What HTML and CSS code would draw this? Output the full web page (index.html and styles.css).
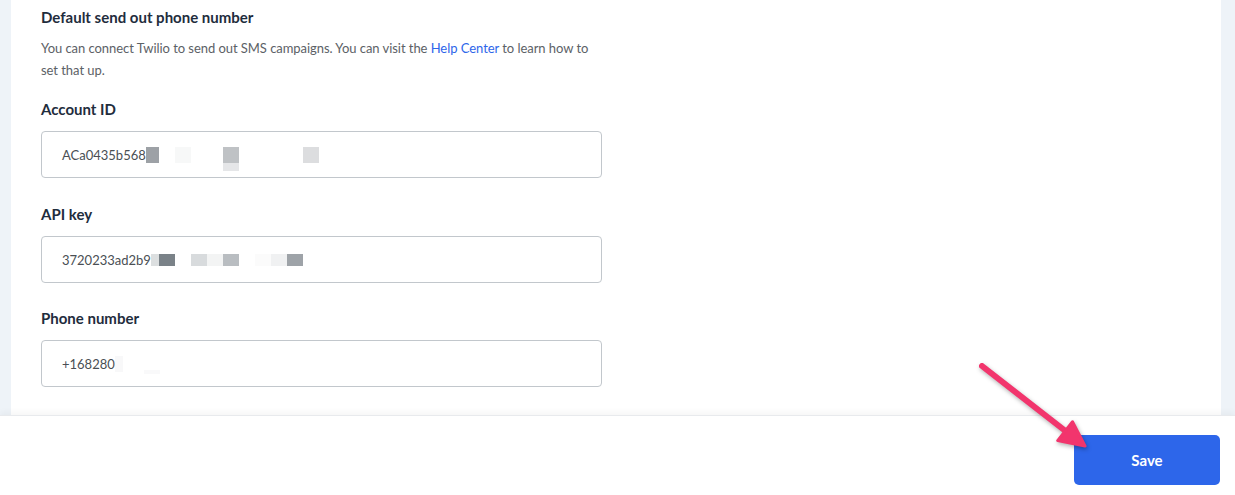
FILE: index.html
```html
<!DOCTYPE html>
<html lang="en">

<head>
    <meta charset="UTF-8" />
    <meta name="viewport" content="width=device-width, initial-scale=1" />
    <title>SMS settings</title>
    <link rel="stylesheet" href="styles.css">
</head>

<body>
    <div class="page">
        <div class="card">
            <h3 class="section-title">Default send out phone number</h3>
            <p class="section-text">
                You can connect Twilio to send out SMS campaigns. You can visit the
                <a href="#" class="link">Help Center</a> to learn how to<br>set that up.
            </p>

            <label class="field-label">Account ID</label>
            <div class="field">
                <span class="value">ACa0435b568</span>
                <span class="blur">
                    <i class="px" style="left:0;width:13px;background:#9da1a6"></i>
                    <i class="px" style="left:29px;background:#f7f8f8"></i>
                    <i class="px tall" style="left:77px;background:#bfc2c5"></i>
                    <i class="px" style="left:157px;background:#dcdddf"></i>
                </span>
            </div>

            <label class="field-label">API key</label>
            <div class="field">
                <span class="value">3720233ad2b9</span>
                <span class="blur small">
                    <i class="px" style="left:0;width:8px;background:#dcdfe0"></i>
                    <i class="px" style="left:8px;background:#7a8288"></i>
                    <i class="px" style="left:40px;background:#d8dbdd"></i>
                    <i class="px" style="left:56px;background:#f3f4f4"></i>
                    <i class="px" style="left:72px;background:#b9bdc1"></i>
                    <i class="px" style="left:104px;background:#fbfbfb"></i>
                    <i class="px" style="left:120px;background:#f0f1f2"></i>
                    <i class="px" style="left:136px;background:#9ea3a8"></i>
                </span>
            </div>

            <label class="field-label last">Phone number</label>
            <div class="field">
                <span class="value">+168280</span>
                <span class="blur">
                    <i class="px" style="left:0;width:8px;background:#f8f8f9"></i>
                    <i class="px low" style="left:29px;background:#f9f9fa"></i>
                </span>
            </div>
        </div>
    </div>

    <div class="footer">
        <button class="save-btn">Save</button>
    </div>

    <!-- flecha de la captura, va encima de todo -->
    <svg class="arrow" width="1235" height="495" viewBox="0 0 1235 495">
        <line x1="982" y1="366" x2="1068" y2="433" stroke="#f2356d" stroke-width="6" stroke-linecap="round" />
        <polygon points="1085,446 1057.7,440.6 1072.5,421.8" fill="#f2356d" stroke="#f2356d" stroke-width="3" stroke-linejoin="round" />
    </svg>
</body>

</html>
```

FILE: styles.css
```css
body {
    margin: 0;
    font-family: Lato, "Noto Sans", sans-serif;
    background: #eef3f8;
    color: #1f2d3d;
    position: relative;
    height: 495px;
    overflow: hidden;
}

.page {
    height: 415px;
    padding: 0 14px 0 11px;
    overflow: hidden;
}

.card {
    background: #fff;
    height: 100%;
    box-sizing: border-box;
    padding: 7px 0 0 30px;
}

.section-title {
    margin: 0;
    font-size: 15px;
    line-height: 20px;
    font-weight: 700;
    color: #1f2d3d;
}

.section-text {
    margin: 10px 0 0;
    font-size: 13px;
    line-height: 22px;
    letter-spacing: -0.05px;
    color: #5c6166;
}

.link {
    color: #2d66ea;
    text-decoration: none;
}

.field-label {
    display: block;
    margin-top: 18px;
    font-size: 15px;
    line-height: 20px;
    font-weight: 700;
    color: #1f2d3d;
}

.field + .field-label {
    margin-top: 26px;
}

.field + .field-label.last {
    margin-top: 25px;
}

.field {
    margin-top: 12px;
    width: 561px;
    height: 47px;
    box-sizing: border-box;
    border: 1px solid #c2c7cc;
    border-radius: 4px;
    padding: 0 20px;
    display: flex;
    align-items: center;
    font-size: 13px;
    color: #4a4f54;
}

.blur {
    position: relative;
    height: 16px;
    width: 200px;
}

.blur .px {
    position: absolute;
    top: 0;
    width: 16px;
    height: 16px;
}

.blur.small .px {
    top: 2px;
    height: 12px;
}

.blur .px.tall {
    box-shadow: 0 8px 0 #e5e6e8;
}

.blur .px.low {
    top: 14px;
    height: 4px;
}

.footer {
    height: 80px;
    box-sizing: border-box;
    background: #fff;
    border-top: 1px solid #e8eaed;
    box-shadow: 0 -3px 6px rgba(0, 0, 0, 0.04);
    display: flex;
    justify-content: flex-end;
    padding: 19px 15px 0 0;
    position: relative;
}

.save-btn {
    width: 146px;
    height: 50px;
    border: none;
    border-radius: 5px;
    background: #2d66ea;
    color: #fff;
    font-family: Lato, "Noto Sans", sans-serif;
    font-size: 15px;
    font-weight: 700;
    cursor: pointer;
}

.arrow {
    position: absolute;
    top: 0;
    left: 0;
    pointer-events: none;
    filter: drop-shadow(1px 2px 2px rgba(0, 0, 0, 0.3));
}
```
